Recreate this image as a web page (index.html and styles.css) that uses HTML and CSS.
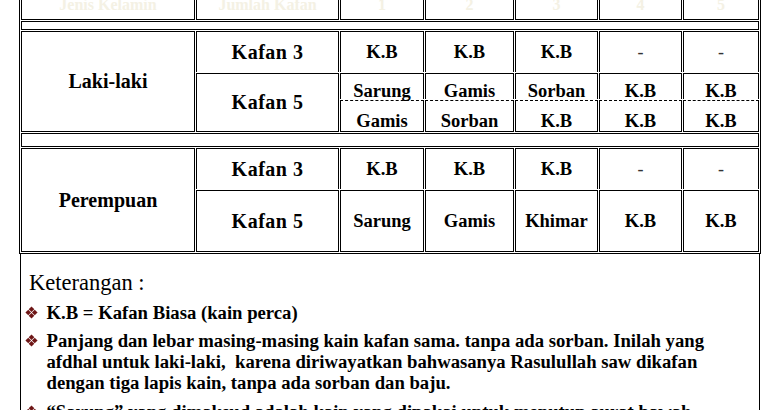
FILE: index.html
```html
<!DOCTYPE html>
<html lang="id">
<head>
<meta charset="utf-8">
<title>Tabel Kafan</title>
<link rel="stylesheet" href="styles.css">
</head>
<body>
<div class="page">
  <table class="kafan">
    <tr class="r-top">
      <td class="c1">Jenis Kelamin</td>
      <td class="c2">Jumlah Kafan</td>
      <td class="c3">1</td>
      <td class="c4">2</td>
      <td class="c5">3</td>
      <td class="c6">4</td>
      <td class="c7">5</td>
    </tr>
    <tr class="r-gap1"><td colspan="7"></td></tr>
    <tr class="r-k3">
      <td rowspan="3" class="sex">Laki-laki</td>
      <td class="kaf nb">Kafan 3</td>
      <td class="nb">K.B</td>
      <td class="nb">K.B</td>
      <td class="nb">K.B</td>
      <td class="nb dash">-</td>
      <td class="nb dash">-</td>
    </tr>
    <tr class="r-s1">
      <td rowspan="2" class="kaf">Kafan 5</td>
      <td class="sub1">Sarung</td>
      <td class="sub1">Gamis</td>
      <td class="sub1">Sorban</td>
      <td class="sub1">K.B</td>
      <td class="sub1">K.B</td>
    </tr>
    <tr class="r-s2">
      <td class="sub2">Gamis</td>
      <td class="sub2">Sorban</td>
      <td class="sub2">K.B</td>
      <td class="sub2">K.B</td>
      <td class="sub2">K.B</td>
    </tr>
    <tr class="r-gap2"><td colspan="7"></td></tr>
    <tr class="r-k3">
      <td rowspan="2" class="sex">Perempuan</td>
      <td class="kaf nb">Kafan 3</td>
      <td class="nb">K.B</td>
      <td class="nb">K.B</td>
      <td class="nb">K.B</td>
      <td class="nb dash">-</td>
      <td class="nb dash">-</td>
    </tr>
    <tr class="r-k5">
      <td class="kaf">Kafan 5</td>
      <td>Sarung</td>
      <td>Gamis</td>
      <td>Khimar</td>
      <td>K.B</td>
      <td>K.B</td>
    </tr>
  </table>

  <div class="notes">
    <p class="notes-title">Keterangan :</p>
    <ul class="notes-list">
      <li>
        <svg class="bullet" viewBox="0 0 12 12" aria-hidden="true"><polygon points="6,0.4 8.6,3 6,5.6 3.4,3"/><polygon points="9,3.4 11.6,6 9,8.6 6.4,6"/><polygon points="6,6.4 8.6,9 6,11.6 3.4,9"/><polygon points="3,3.4 5.6,6 3,8.6 0.4,6"/></svg>
        <span class="note-text">K.B = Kafan Biasa (kain perca)</span>
      </li>
      <li>
        <svg class="bullet" viewBox="0 0 12 12" aria-hidden="true"><polygon points="6,0.4 8.6,3 6,5.6 3.4,3"/><polygon points="9,3.4 11.6,6 9,8.6 6.4,6"/><polygon points="6,6.4 8.6,9 6,11.6 3.4,9"/><polygon points="3,3.4 5.6,6 3,8.6 0.4,6"/></svg>
        <span class="note-text">Panjang dan lebar masing-masing kain kafan sama. tanpa ada sorban. Inilah yang<br>afdhal untuk laki-laki,&nbsp; karena diriwayatkan bahwasanya Rasulullah saw dikafan<br>dengan tiga lapis kain, tanpa ada sorban dan baju.</span>
      </li>
      <li>
        <svg class="bullet" viewBox="0 0 12 12" aria-hidden="true"><polygon points="6,0.4 8.6,3 6,5.6 3.4,3"/><polygon points="9,3.4 11.6,6 9,8.6 6.4,6"/><polygon points="6,6.4 8.6,9 6,11.6 3.4,9"/><polygon points="3,3.4 5.6,6 3,8.6 0.4,6"/></svg>
        <span class="note-text">“Sarung” yang dimaksud adalah kain yang dipakai untuk menutup aurat bawah</span>
      </li>
    </ul>
  </div>
</div>
</body>
</html>
```
FILE: styles.css
```css
html, body {
  margin: 0;
  padding: 0;
  background: #ffffff;
}

body {
  font-family: "Liberation Serif", "Times New Roman", serif;
  color: #000;
  overflow: hidden;
}

.page {
  padding-left: 19px;
}

/* ---------- table ---------- */
.kafan {
  box-sizing: border-box;
  width: 742px;
  margin-top: -12px;
  table-layout: fixed;
  border-collapse: separate;
  border-spacing: 1px;
  border: 1px solid #000;
  font-weight: bold;
  font-size: 18.5px;
}

.kafan td {
  box-sizing: border-box;
  border: 1px solid #000;
  padding: 0;
  text-align: center;
  vertical-align: middle;
  white-space: nowrap;
}

.kafan .c1 { width: 174px; }
.kafan .c2 { width: 143px; }
.kafan .c3 { width: 84px; }
.kafan .c4 { width: 89px; }
.kafan .c5 { width: 83px; }
.kafan .c6 { width: 83px; }
.kafan .c7 { width: 76px; }

.r-top td {
  height: 30px;
  color: #f4f1e4;
  font-size: 16px;
  overflow: hidden;
}

.r-gap1 td { height: 9px; }
.r-gap2 td { height: 14px; }
.r-k3 td { height: 41px; }
.r-s1 td { height: 26px; }
.r-s2 td { height: 32px; }
.r-k5 td { height: 62px; }

.kafan td.sex,
.kafan td.kaf {
  font-size: 20px;
}

.kafan td.kaf {
  letter-spacing: 0.5px;
}

.kafan td.nb {
  border-bottom: 0;
}

.kafan td.dash {
  font-weight: normal;
  font-size: 18px;
  color: #333;
}

.kafan td.sub1 {
  border-bottom: 0;
  vertical-align: top;
  line-height: 16px;
  padding-top: 9px;
}

.kafan td.sub2 {
  border-top: 1px dashed #000;
  vertical-align: top;
  line-height: 16px;
  padding-top: 12px;
}

/* ---------- notes ---------- */
.notes {
  box-sizing: border-box;
  width: 740px;
  height: 190px;
  margin-left: 1px;
  border-left: 1px solid #000;
  border-right: 1px solid #000;
  padding-top: 16px;
  overflow: hidden;
}

.notes-title {
  margin: 0 0 0 8px;
  font-size: 22.5px;
  line-height: 25px;
  font-weight: normal;
}

.notes-list {
  list-style: none;
  margin: 6.5px 0 0 0;
  padding: 0;
  font-weight: bold;
  font-size: 18.7px;
  line-height: 21px;
}

.notes-list li {
  display: grid;
  grid-template-columns: 25.5px 1fr;
  margin-bottom: 7.5px;
}

.bullet {
  width: 13px;
  height: 13px;
  margin: 4px 0 0 3.5px;
  fill: #6e1616;
}

.note-text {
  white-space: nowrap;
}
```
